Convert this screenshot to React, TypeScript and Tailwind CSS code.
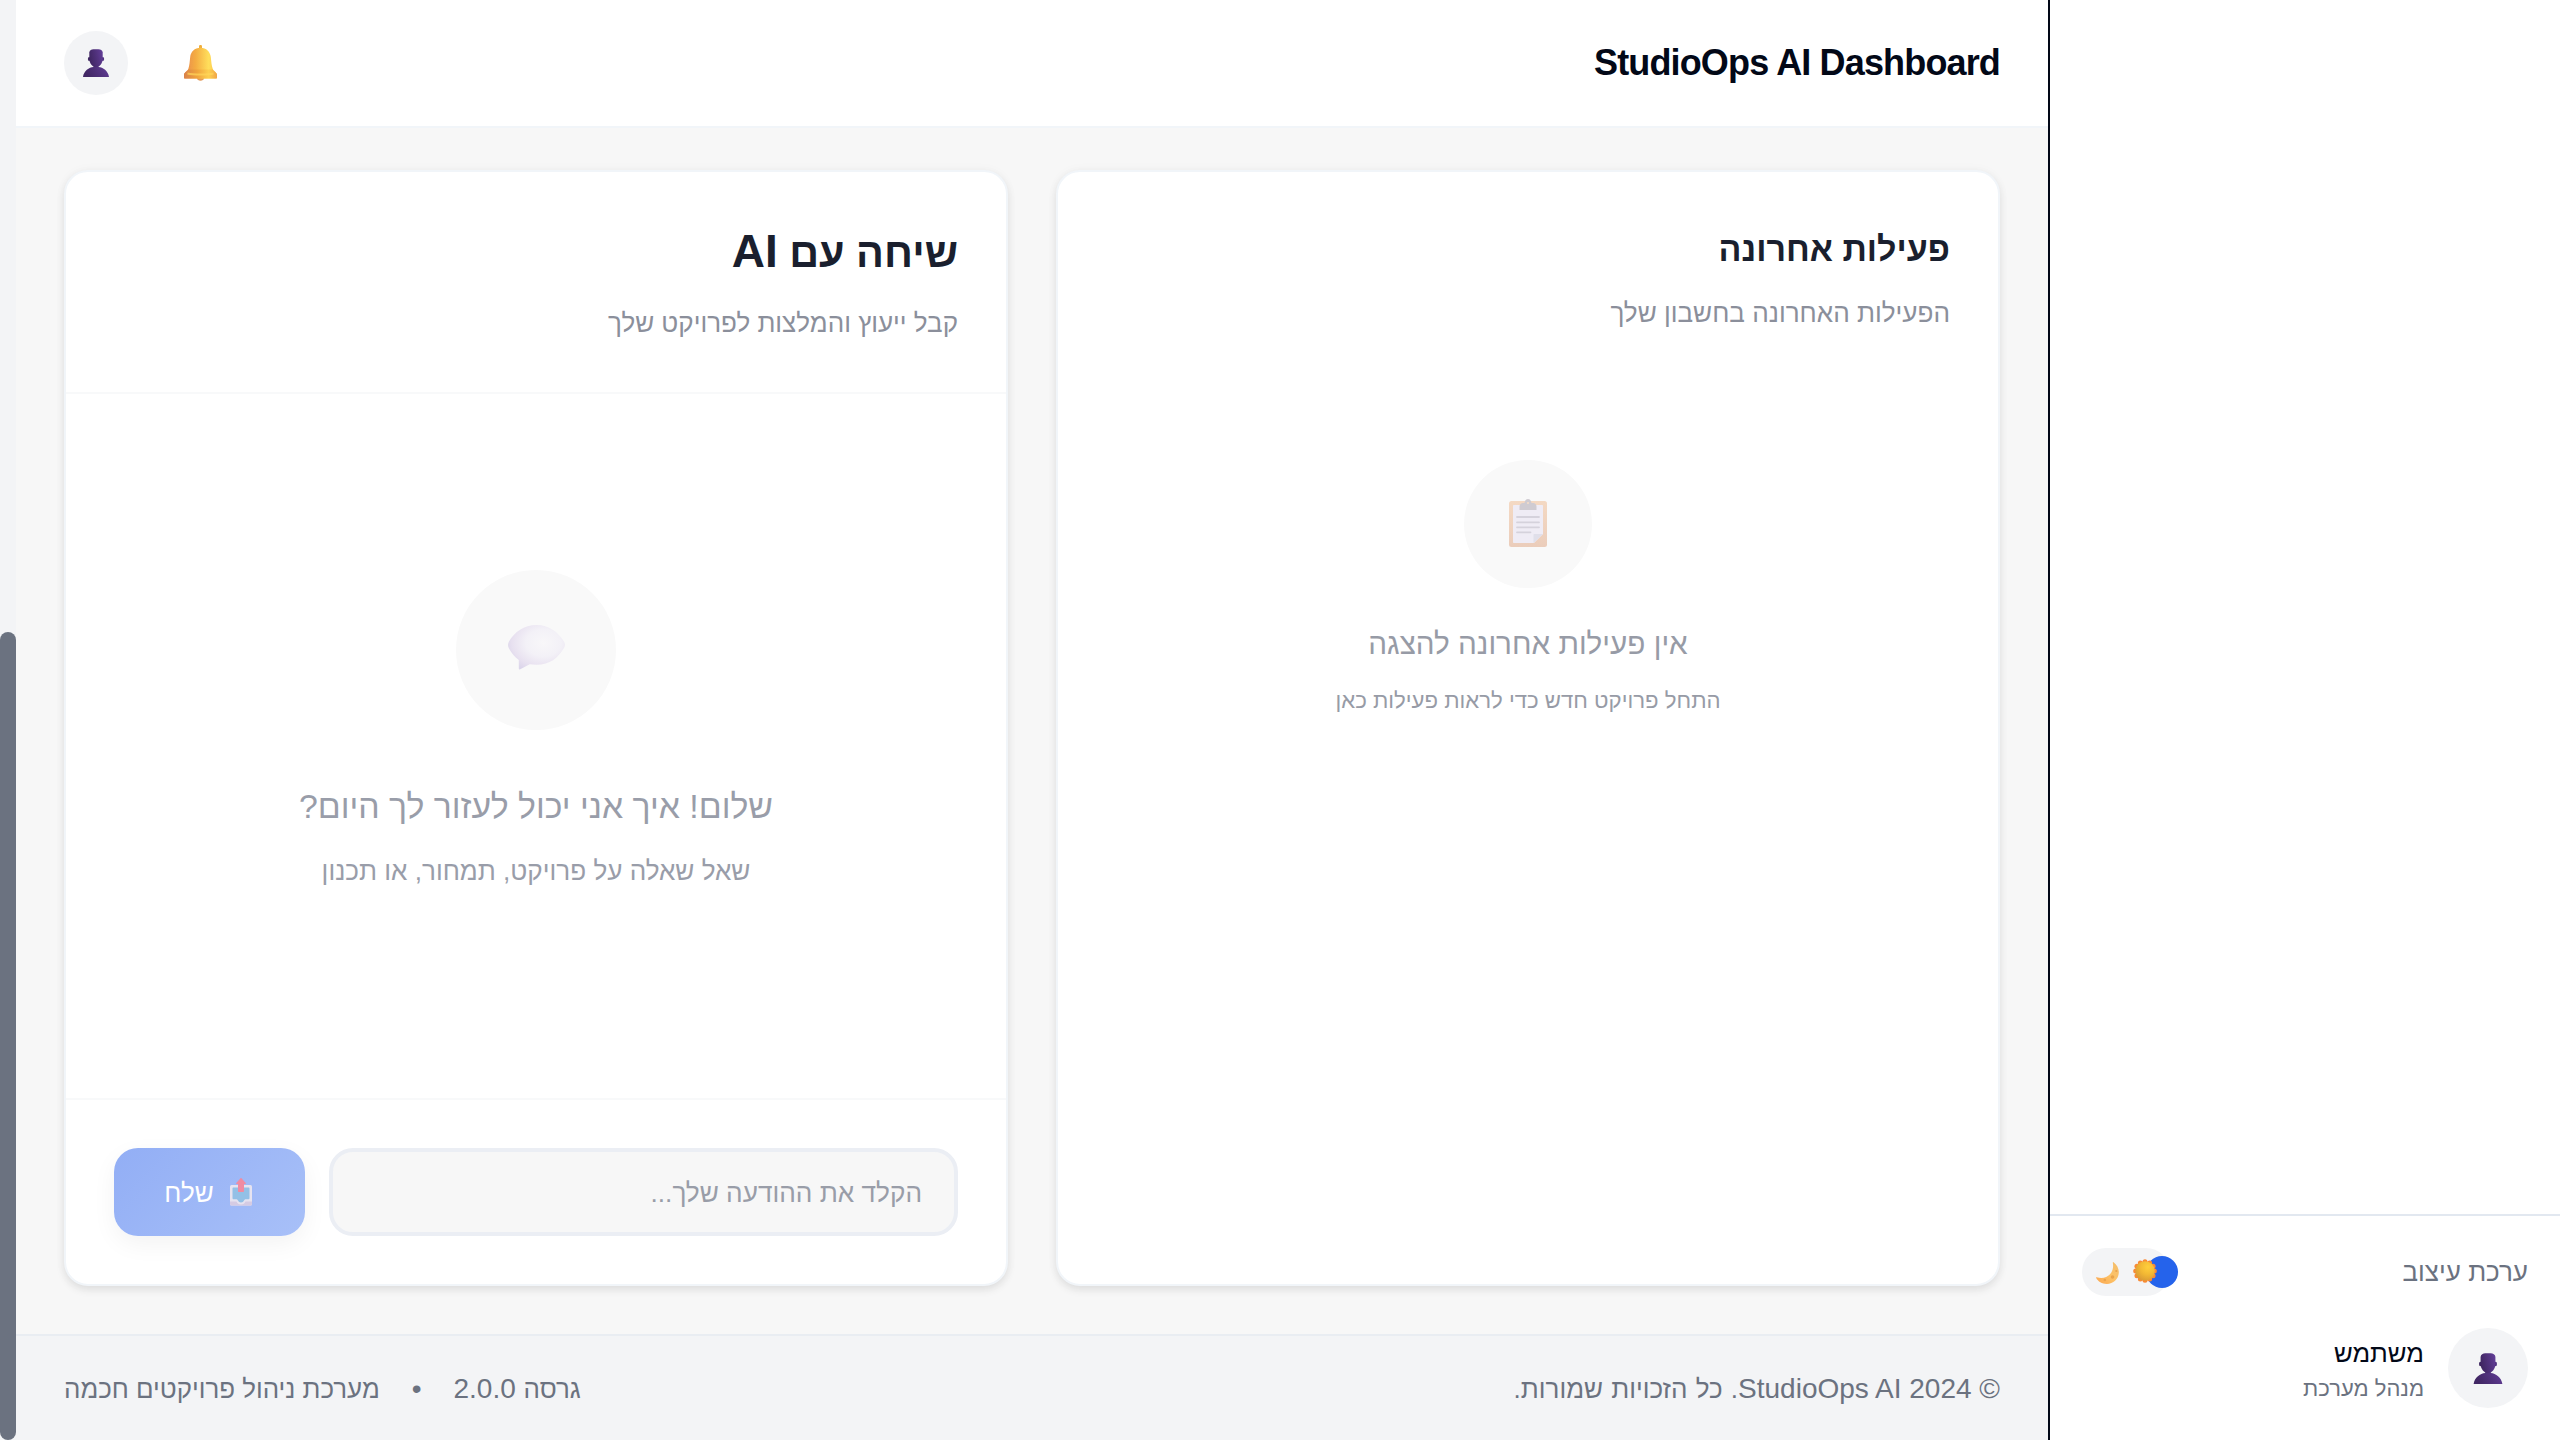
import React from "react";

type IconProps = { className?: string };

function Person({ className }: IconProps) {
  return (
    <svg viewBox="0 0 26 28" className={className}>
      <defs>
        <linearGradient id="pg" x1="0" x2="1" y1="0.3" y2="0">
          <stop offset="0" stopColor="#412764" />
          <stop offset="0.55" stopColor="#533380" />
          <stop offset="1" stopColor="#643f9b" />
        </linearGradient>
      </defs>
      <path d="M0 28C.8 22 6 18.300 10.500 18V16h5v2C20 18.300 25.200 22 26 28Z" fill="url(#pg)" />
      <ellipse cx="6.100" cy="10" rx="1.200" ry="2" fill="#3b235e" />
      <ellipse cx="19.900" cy="10" rx="1.200" ry="2" fill="#4c2d7c" />
      <path d="M6.300 3.500C6.500 1.200 8.500.3 10.500.2h5c2 .1 4 1 4.200 3.300V10c0 4.300-3.300 8.300-6.700 8.300S6.300 14.300 6.300 10Z" fill="url(#pg)" />
    </svg>
  );
}

function Bell({ className }: IconProps) {
  return (
    <svg viewBox="0 0 33 36" className={className}>
      <defs>
        <linearGradient id="bg1" x1="0" x2="1">
          <stop offset="0" stopColor="#e8894f" />
          <stop offset="0.35" stopColor="#f4ac42" />
          <stop offset="0.75" stopColor="#ffdf5c" />
          <stop offset="1" stopColor="#fbc04a" />
        </linearGradient>
        <linearGradient id="bg2" x1="0" x2="1">
          <stop offset="0" stopColor="#d9824a" />
          <stop offset="0.4" stopColor="#f0a43c" />
          <stop offset="0.75" stopColor="#fdd050" />
          <stop offset="1" stopColor="#f0a548" />
        </linearGradient>
      </defs>
      <path d="M15 4V1.200C15 .4 15.700 0 16.500 0S18 .4 18 1.200V4Z" fill="#f0ae3c" />
      <path d="M13 33h7c0 1.700-1.600 2.700-3.500 2.700S13 34.700 13 33Z" fill="#e39a5b" />
      <path d="M16.500 2.800C10.500 2.800 6.800 7 6.200 12c-.5 4.500-.7 8.500-1.900 12C3.500 26 0 27.500 0 30v2.600c0 .6.4 1 1 1h31c.6 0 1-.4 1-1V30c0-2.500-3.400-4-4.200-6-1.300-3.500-1.500-7.500-2-12-.6-5-4.300-9.200-10.300-9.200Z" fill="url(#bg1)" />
      <path d="M4.300 24.500h24.500C29.600 26.400 33 27.500 33 30v2.600c0 .6-.4 1-1 1H1c-.6 0-1-.4-1-1V30c0-2.500 3.500-3.600 4.300-5.500Z" fill="url(#bg2)" />
      <path d="M3.500 28.500c6 1.300 20 1.300 26 0" stroke="#ffd65a" strokeWidth="2" fill="none" opacity="0.7" />
    </svg>
  );
}

function Clipboard({ className }: IconProps) {
  return (
    <svg viewBox="0 0 38 48" className={className}>
      <defs>
        <linearGradient id="cb" x1="0" x2="0" y1="0" y2="1">
          <stop offset="0" stopColor="#f4d9c3" />
          <stop offset="1" stopColor="#ebcdbb" />
        </linearGradient>
      </defs>
      <rect x="0" y="2" width="38" height="46" rx="2.500" fill="url(#cb)" />
      <path d="M4 7c0-.6.4-1 1-1h28c.6 0 1 .4 1 1v28l-9 9H5c-.6 0-1-.4-1-1Z" fill="#efecf5" />
      <path d="M24.500 44v-8c0-.6.4-1 1-1H34Z" fill="#e0dfea" />
      <path d="M10.500 11V7.500C10.500 5.500 12 4 14 4h1.500C16 1.500 17 0 19 0s3 1.500 3.500 4H24c2 0 3.500 1.500 3.500 3.500V11Z" fill="#cfcbd1" />
      <circle cx="19" cy="4" r="1.100" fill="#f3dcc8" />
      <g stroke="#d5d2dc" strokeWidth="1.800" strokeLinecap="round">
        <path d="M8 18h22M8 23.300h22M8 28.300h22M8 33.300h13.500" />
      </g>
    </svg>
  );
}

function Bubble({ className }: IconProps) {
  return (
    <svg viewBox="0 0 57 45" className={className}>
      <defs>
        <radialGradient id="bb" cx="0.62" cy="0.4" r="0.68">
          <stop offset="0" stopColor="#f8f7f9" />
          <stop offset="0.45" stopColor="#f3f1f7" />
          <stop offset="0.8" stopColor="#e8e1f0" />
          <stop offset="1" stopColor="#dcd6eb" />
        </radialGradient>
      </defs>
      <path d="M28.500 0C41 0 50 7 56 16.500c1.300 2.200 1.300 4.300 0 6.500C50 33 42 39.800 28.500 39.800c-2.500 0-4.700-.2-6.800-.5l-9.400 5c-1 .5-1.500.2-1.500-.8V35C6.500 32 3.500 28 1 23.500c-1.300-2.300-1.300-4.600 0-7C6.500 7 16 0 28.500 0Z" fill="url(#bb)" />
    </svg>
  );
}

function Outbox({ className }: IconProps) {
  return (
    <svg viewBox="0 0 22 28" className={className}>
      <rect x="0" y="7" width="22" height="20.500" rx="1.500" fill="#e6e3f0" />
      <path d="M3.500 9.500h15c.6 0 1 .4 1 1V20c0 .8-.4 1.300-1.200 1.300H16c-1 0-1.500.5-2 1.300-.6 1.300-1.500 2-3 2s-2.400-.7-3-2c-.5-.8-1-1.300-2-1.300H3.700c-.8 0-1.200-.5-1.200-1.300v-9.500c0-.6.4-1 1-1Z" fill="#93c0e6" />
      <path d="M0 23.500h6.500c.8 2 2.200 3 4.500 3s3.700-1 4.500-3H22V26c0 .9-.6 1.500-1.500 1.500h-19C.6 27.500 0 26.900 0 26Z" fill="#d5cbe3" />
      <path d="M11 0c.3 0 .5.1.7.4l4 4.600c.4.500.1 1-.5 1H14v7c0 .6-.4 1-1 1H9c-.6 0-1-.4-1-1V6H6.800c-.6 0-.9-.5-.5-1l4-4.600c.2-.3.400-.4.700-.4Z" fill="#ef8ba2" />
    </svg>
  );
}

function Moon({ className }: IconProps) {
  return (
    <svg viewBox="0 0 23 22" className={className}>
      <defs>
        <linearGradient id="mn" x1="0" x2="1" y1="1" y2="0">
          <stop offset="0" stopColor="#fba650" />
          <stop offset="0.5" stopColor="#fdc266" />
          <stop offset="1" stopColor="#f3bd6c" />
        </linearGradient>
      </defs>
      <path d="M17.500.2c3.500 2.600 5.500 6.300 5.300 10.500-.3 6.300-5.600 11.200-12 11.200C6 21.900 2 19.700.1 15.800c-.2-.5.2-.8.700-.6 5 1.500 10 .6 13.200-2.900C16.800 9.200 17.600 5 16.800.7c-.1-.5.300-.8.700-.5Z" fill="url(#mn)" />
      <circle cx="16.500" cy="15" r="1.800" fill="#e9a34b" />
      <circle cx="8.800" cy="18" r="1.300" fill="#e9a34b" />
      <circle cx="20.300" cy="9" r="1.100" fill="#e9a34b" />
    </svg>
  );
}

function Sun({ className }: IconProps) {
  const petals = Array.from({ length: 12 }, (_, i) => (i * Math.PI) / 6);
  return (
    <svg viewBox="0 0 24 24" className={className}>
      <defs>
        <radialGradient id="sn" cx="0.65" cy="0.3" r="0.75">
          <stop offset="0" stopColor="#ffcf3c" />
          <stop offset="0.5" stopColor="#f3b934" />
          <stop offset="1" stopColor="#d99a35" />
        </radialGradient>
      </defs>
      {petals.map((a) => (
        <circle key={a} cx={12 + 9.3 * Math.sin(a)} cy={12 - 9.3 * Math.cos(a)} r="2.500" fill="#f98a35" />
      ))}
      <circle cx="12" cy="12" r="9.800" fill="url(#sn)" />
    </svg>
  );
}

export default function App() {
  return (
    <div
      dir="rtl"
      className="flex h-[1440px] w-[2560px] overflow-hidden bg-white font-['Liberation_Sans',sans-serif] text-[#020817]"
    >
      <aside className="flex w-[512px] shrink-0 flex-col justify-end border-l-2 border-[#020817]">
        <div className="flex flex-col gap-8 border-t-2 border-[#e2e8f0] p-8">
          <div className="flex h-12 items-center justify-between">
            <span className="pt-px text-[26px] text-[#6b7280]">ערכת עיצוב</span>
            <div className="relative flex h-12 w-[88px] items-center justify-between rounded-full bg-[#f3f4f6] pr-[13px] pl-[14px]">
              <span className="absolute -right-2 size-8 rounded-full bg-[#2563eb]" />
              <Sun className="relative -top-px size-6" />
              <Moon className="relative top-px h-[22px] w-[23px]" />
            </div>
          </div>
          <div className="flex h-20 items-center gap-6">
            <div className="flex size-20 items-center justify-center rounded-full bg-[#f3f4f6]">
              <Person className="h-[31px] w-[30px]" />
            </div>
            <div className="flex flex-col pt-[2px]">
              <span className="text-[25.700px] leading-[40px]">משתמש</span>
              <span className="text-[22px] leading-[32px] text-[#6b7280]">מנהל מערכת</span>
            </div>
          </div>
        </div>
      </aside>

      <div className="flex min-w-0 flex-1 flex-col bg-[#f7f7f7]">
        <header className="flex h-32 shrink-0 items-center justify-between border-b-2 border-[#f1f5f9] bg-white px-12">
          <h1 dir="ltr" className="text-[36px] font-bold tracking-[-0.85px]">StudioOps AI Dashboard</h1>
          <div className="flex items-center gap-14">
            <Bell className="h-9 w-[33px]" />
            <div className="flex size-16 items-center justify-center rounded-full bg-[#f3f4f6]">
              <Person className="h-7 w-[26px]" />
            </div>
          </div>
        </header>

        <main className="grid flex-1 grid-cols-2 gap-12 px-12 pt-[42px] pb-12">
          <section className="flex flex-col rounded-[24px] border-2 border-[#f1f5f9] bg-white p-12 shadow-[0_4px_8px_rgba(0,0,0,0.09),0_0_12px_rgba(0,0,0,0.03)]">
            <h2 className="text-[34px] leading-[59px] font-bold text-[#1a1f2e]">פעילות אחרונה</h2>
            <p className="mt-3.5 text-[26.100px] leading-[40px] text-[#8b8f9b]">הפעילות האחרונה בחשבון שלך</p>
            <div className="mt-[127px] flex flex-col items-center text-[#979ba6]">
              <div className="flex size-32 items-center justify-center rounded-full bg-[#f9f9f9] pb-[2px]">
                <Clipboard className="h-12 w-[38px]" />
              </div>
              <p className="mt-9 text-[29.700px] leading-[40px]">אין פעילות אחרונה להצגה</p>
              <p className="mt-[21px] text-[22.200px] leading-[32px]">התחל פרויקט חדש כדי לראות פעילות כאן</p>
            </div>
          </section>

          <section className="flex flex-col rounded-[24px] border-2 border-[#f1f5f9] bg-white shadow-[0_4px_8px_rgba(0,0,0,0.09),0_0_12px_rgba(0,0,0,0.03)]">
            <div className="h-[222px] border-b-2 border-[#f8f9fa] p-12">
              <h2 className="text-[46px] leading-[62px] font-bold text-[#1a1f2e]">
                <span className="text-[41.400px]">שיחה עם </span>AI
              </h2>
              <p className="mt-[19px] text-[26px] leading-[40px] text-[#8b8f9b]">קבל ייעוץ והמלצות לפרויקט שלך</p>
            </div>
            <div className="flex flex-1 flex-col items-center pt-44 text-[#999da9]">
              <div className="flex size-40 items-center justify-center rounded-full bg-[#f9f9f9] pb-1.5">
                <Bubble className="h-[45px] w-[57px]" />
              </div>
              <p className="mt-[52px] text-[33.800px] leading-[48px]">שלום! איך אני יכול לעזור לך היום?</p>
              <p className="mt-[21px] text-[26.100px] leading-[40px]">שאל שאלה על פרויקט, תמחור, או תכנון</p>
            </div>
            <div className="flex gap-6 border-t-2 border-[#f8f9fa] p-12">
              <input
                placeholder="הקלד את ההודעה שלך..."
                className="h-[88px] min-w-0 flex-1 rounded-[24px] border-4 border-[#ebeef4] bg-[#f7f7f7] px-8 pt-[2px] text-[26.200px] outline-none placeholder:text-[#999da8] placeholder:opacity-100"
              />
              <button className="flex h-[88px] w-[191px] items-center justify-center gap-4 rounded-[24px] bg-linear-[135deg] from-[#92aef5] to-[#a8c0f8] pr-[3px] text-[26px] text-white shadow-[0_8px_24px_rgba(0,0,0,0.05)]">
                <Outbox className="h-7 w-[22px]" />
                <span className="pt-[2px]">שלח</span>
              </button>
            </div>
          </section>
        </main>

        <footer className="flex h-[106px] shrink-0 items-center justify-between border-t-2 border-[#e9edf2] bg-[#f3f4f6] px-12 pt-[2px] text-[28px] text-[#6b7280]">
          <p>
            © 2024 StudioOps AI<span className="text-[26px] [word-spacing:1px]">. כל הזכויות שמורות.</span>
          </p>
          <div className="flex items-center gap-8">
            <span><span className="text-[25.900px]">גרסה</span> 2.0.0</span>
            <span>•</span>
            <span><span className="text-[25.900px]">מערכת ניהול פרויקטים חכמה</span></span>
          </div>
        </footer>
      </div>

      <div className="flex w-4 shrink-0 flex-col justify-end bg-[#f3f4f6]">
        <div className="h-[808px] rounded-full bg-[#6b7280]" />
      </div>
    </div>
  );
}
